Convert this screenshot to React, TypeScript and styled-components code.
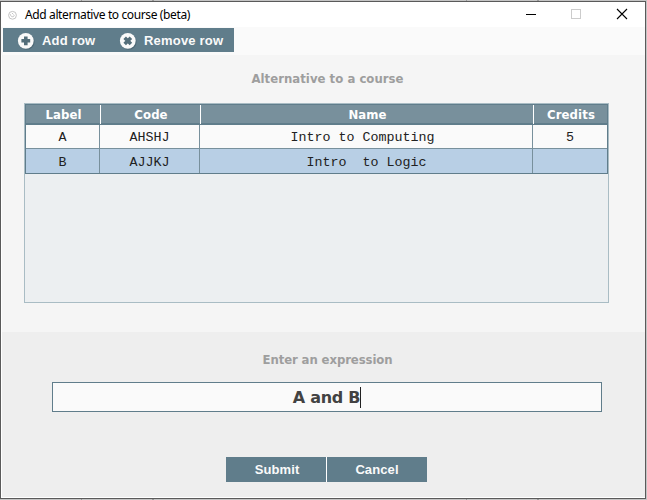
import React from 'react';
import styled, { createGlobalStyle } from 'styled-components';

const GlobalStyle = createGlobalStyle`
  * { box-sizing: border-box; }
  body { margin: 0; overflow: hidden; background: #bdbdbd; }
`;

const Desktop = styled.div`
  width: 647px;
  height: 500px;
  padding: 1px 1px 1px 0;
  background: linear-gradient(90deg, transparent 81px, #999 81px, #999 82px, transparent 82px, transparent 152px, #999 152px, #999 154px, transparent 154px, transparent 466px, #999 466px, #999 467px, transparent 467px, transparent 537px, #999 537px, #999 539px, transparent 539px), #c4c4c4;
`;

const Window = styled.div`
  display: flex;
  flex-direction: column;
  width: 646px;
  height: 498px;
  border: 1px solid #5a5a5a;
  background: #fff;
`;

const TitleBar = styled.header`
  display: flex;
  align-items: center;
  height: 25px;
  flex: none;
  background: #fff;
`;

const AppMark = styled.svg`
  width: 12px;
  height: 12px;
  margin-left: 5px;
`;

const Title = styled.span`
  flex: 1;
  margin-left: 7px;
  font: 12px/16px "Noto Sans", sans-serif;
  letter-spacing: -0.38px;
  color: #000;
  white-space: nowrap;
`;

const WindowControls = styled.svg`
  width: 138px;
  height: 25px;
`;

const Toolbar = styled.nav`
  display: flex;
  height: 28px;
  flex: none;
  padding: 1px 0 3px 2px;
  background: #fafafa;
`;

const ToolButton = styled.button<{ $width: number; $inset: number }>`
  display: flex;
  align-items: center;
  gap: 7px;
  width: ${(p) => p.$width}px;
  height: 24px;
  padding: 1px 0 0 ${(p) => p.$inset}px;
  border: 0;
  background: #607d8b;
  color: #fafafa;
  font: bold 13px/23px "Liberation Sans", sans-serif;
  letter-spacing: 0.2px;
  white-space: nowrap;
`;

const ToolIcon = styled.svg`
  width: 18px;
  height: 18px;
  flex: none;
`;

const Section = styled.section<{ $tone: string; $height: number; $top: number }>`
  display: flex;
  flex-direction: column;
  align-items: center;
  flex: none;
  width: 643px;
  height: ${(p) => p.$height}px;
  padding-top: ${(p) => p.$top}px;
  margin-left: 1px;
  background: ${(p) => p.$tone};
`;

const Caption = styled.h2<{ $spacing: number }>`
  margin: 0;
  padding-left: 8px;
  font: bold 13px/20px "DejaVu Sans Condensed", "DejaVu Sans", sans-serif;
  font-stretch: condensed;
  letter-spacing: ${(p) => p.$spacing}px;
  color: #9e9e9e;
`;

const TablePane = styled.div`
  width: 585px;
  height: 200px;
  margin: 14px 14px 0 0;
  border: 1px solid #a9bcc4;
  background: #eceff1;
`;

const Grid = styled.div`
  border: 1px solid #607d8b;
`;

const HeaderRow = styled.div`
  display: grid;
  grid-template-columns: 75px 100px 333px 73px;
  height: 20px;
  border-bottom: 2px solid #607d8b;
  background: #78909c;
`;

const HeaderCell = styled.div`
  display: flex;
  justify-content: center;
  padding-left: 1px;
  font: bold 13px/19px "DejaVu Sans Condensed", "DejaVu Sans", sans-serif;
  font-stretch: condensed;
  letter-spacing: 0.1px;
  color: #fff;
  &:not(:last-child) { border-right: 1px solid #fff; }
`;

const Row = styled.div<{ $selected?: boolean }>`
  display: grid;
  grid-template-columns: 74px 100px 333px 74px;
  height: 23px;
  line-height: 26px;
  background: ${(p) => (p.$selected ? '#b8cfe5' : '#fafafa')};
  & + & { border-top: 1px solid #78909c; height: 25px; line-height: 28px; }
`;

const Cell = styled.div`
  height: 100%;
  overflow: hidden;
  font-family: "Liberation Mono", "Courier New", monospace;
  font-size: 13.33px;
  color: #212121;
  text-align: center;
  white-space: pre;
  &:not(:last-child) { border-right: 1px solid #78909c; }
  &:nth-child(3) { padding-left: 1px; }
`;

const Expression = styled.div`
  display: flex;
  align-items: center;
  justify-content: center;
  width: 550px;
  height: 30px;
  margin: 12px 0 0 7px;
  border: 1px solid #607d8b;
  background: #fafafa;
  color: #424242;
  font: bold 16px/28px "DejaVu Sans", sans-serif;
  letter-spacing: -0.3px;
`;

const ExpressionText = styled.span`
  padding-top: 2px;
  line-height: 26px;
`;

const Caret = styled.span`
  width: 1px;
  height: 21px;
  background: #212121;
`;

const Actions = styled.div`
  display: flex;
  gap: 1px;
  width: 201px;
  margin: 45px 0 0 6px;
  background: #fff;
`;

const ActionButton = styled.button<{ $nudge: number }>`
  width: 100px;
  height: 25px;
  padding: 0 0 0 ${(p) => p.$nudge}px;
  border: 0;
  background: #607d8b;
  color: #fafafa;
  font: bold 13px/25px "Liberation Sans", sans-serif;
  letter-spacing: 0.1px;
`;

const columns = ['Label', 'Code', 'Name', 'Credits'];
const rows = [
  ['A', 'AHSHJ', 'Intro to Computing ', '5'],
  ['B', 'AJJKJ', 'Intro  to Logic', ''],
];

function RoundIcon({ rotated = false }: { rotated?: boolean }) {
  return (
    <ToolIcon viewBox="0 0 18 18">
      <circle cx="9.6" cy="9.8" r="8" fill="#455f6c" opacity=".65" />
      <circle cx="8.8" cy="8.8" r="7.9" fill="#fafafa" />
      <path
        d="M8.8 4.4V13.2M4.4 8.8H13.2"
        stroke="#546e7a"
        strokeWidth="3.6"
        transform={rotated ? 'rotate(45 8.8 8.8)' : undefined}
      />
    </ToolIcon>
  );
}

export default function App() {
  return (
    <>
      <GlobalStyle />
      <Desktop>
        <Window>
          <TitleBar>
            <AppMark viewBox="0 0 12 12" fill="none">
              <circle cx="6.5" cy="6.3" r="3.9" stroke="#c4c4c4" />
              <path d="M4.3 5.2c.2 3 3.6 3.3 4 1M6 4l1.5 1.5" stroke="#b5b5b5" strokeWidth=".8" />
            </AppMark>
            <Title>Add alternative to course (beta)</Title>
            <WindowControls viewBox="0 0 138 25" fill="none" shapeRendering="crispEdges">
              <path d="M19 12.5h10" stroke="#000" />
              <path d="M64.5 7.5h9v9h-9z" stroke="#ccc" />
              <path d="M110 7l10 10M120 7l-10 10" stroke="#000" strokeWidth="1.1" shapeRendering="auto" />
            </WindowControls>
          </TitleBar>
          <Toolbar>
            <ToolButton $width={102} $inset={14}><RoundIcon />Add row</ToolButton>
            <ToolButton $width={129} $inset={14}><RoundIcon rotated />Remove row</ToolButton>
          </Toolbar>
          <Section $tone="#f5f5f5" $height={277} $top={14}>
            <Caption $spacing={0.03}>Alternative to a course</Caption>
            <TablePane>
              <Grid>
                <HeaderRow>
                  {columns.map((name) => <HeaderCell key={name}>{name}</HeaderCell>)}
                </HeaderRow>
                {rows.map((row, i) => (
                  <Row key={row[0]} $selected={i === 1}>
                    {row.map((value, j) => <Cell key={j}>{value}</Cell>)}
                  </Row>
                ))}
              </Grid>
            </TablePane>
          </Section>
          <Section $tone="#eeeeee" $height={165} $top={18}>
            <Caption $spacing={-0.1}>Enter an expression</Caption>
            <Expression>
              <ExpressionText>A and B</ExpressionText>
              <Caret />
            </Expression>
            <Actions>
              <ActionButton $nudge={2}>Submit</ActionButton>
              <ActionButton $nudge={0}>Cancel</ActionButton>
            </Actions>
          </Section>
        </Window>
      </Desktop>
    </>
  );
}
